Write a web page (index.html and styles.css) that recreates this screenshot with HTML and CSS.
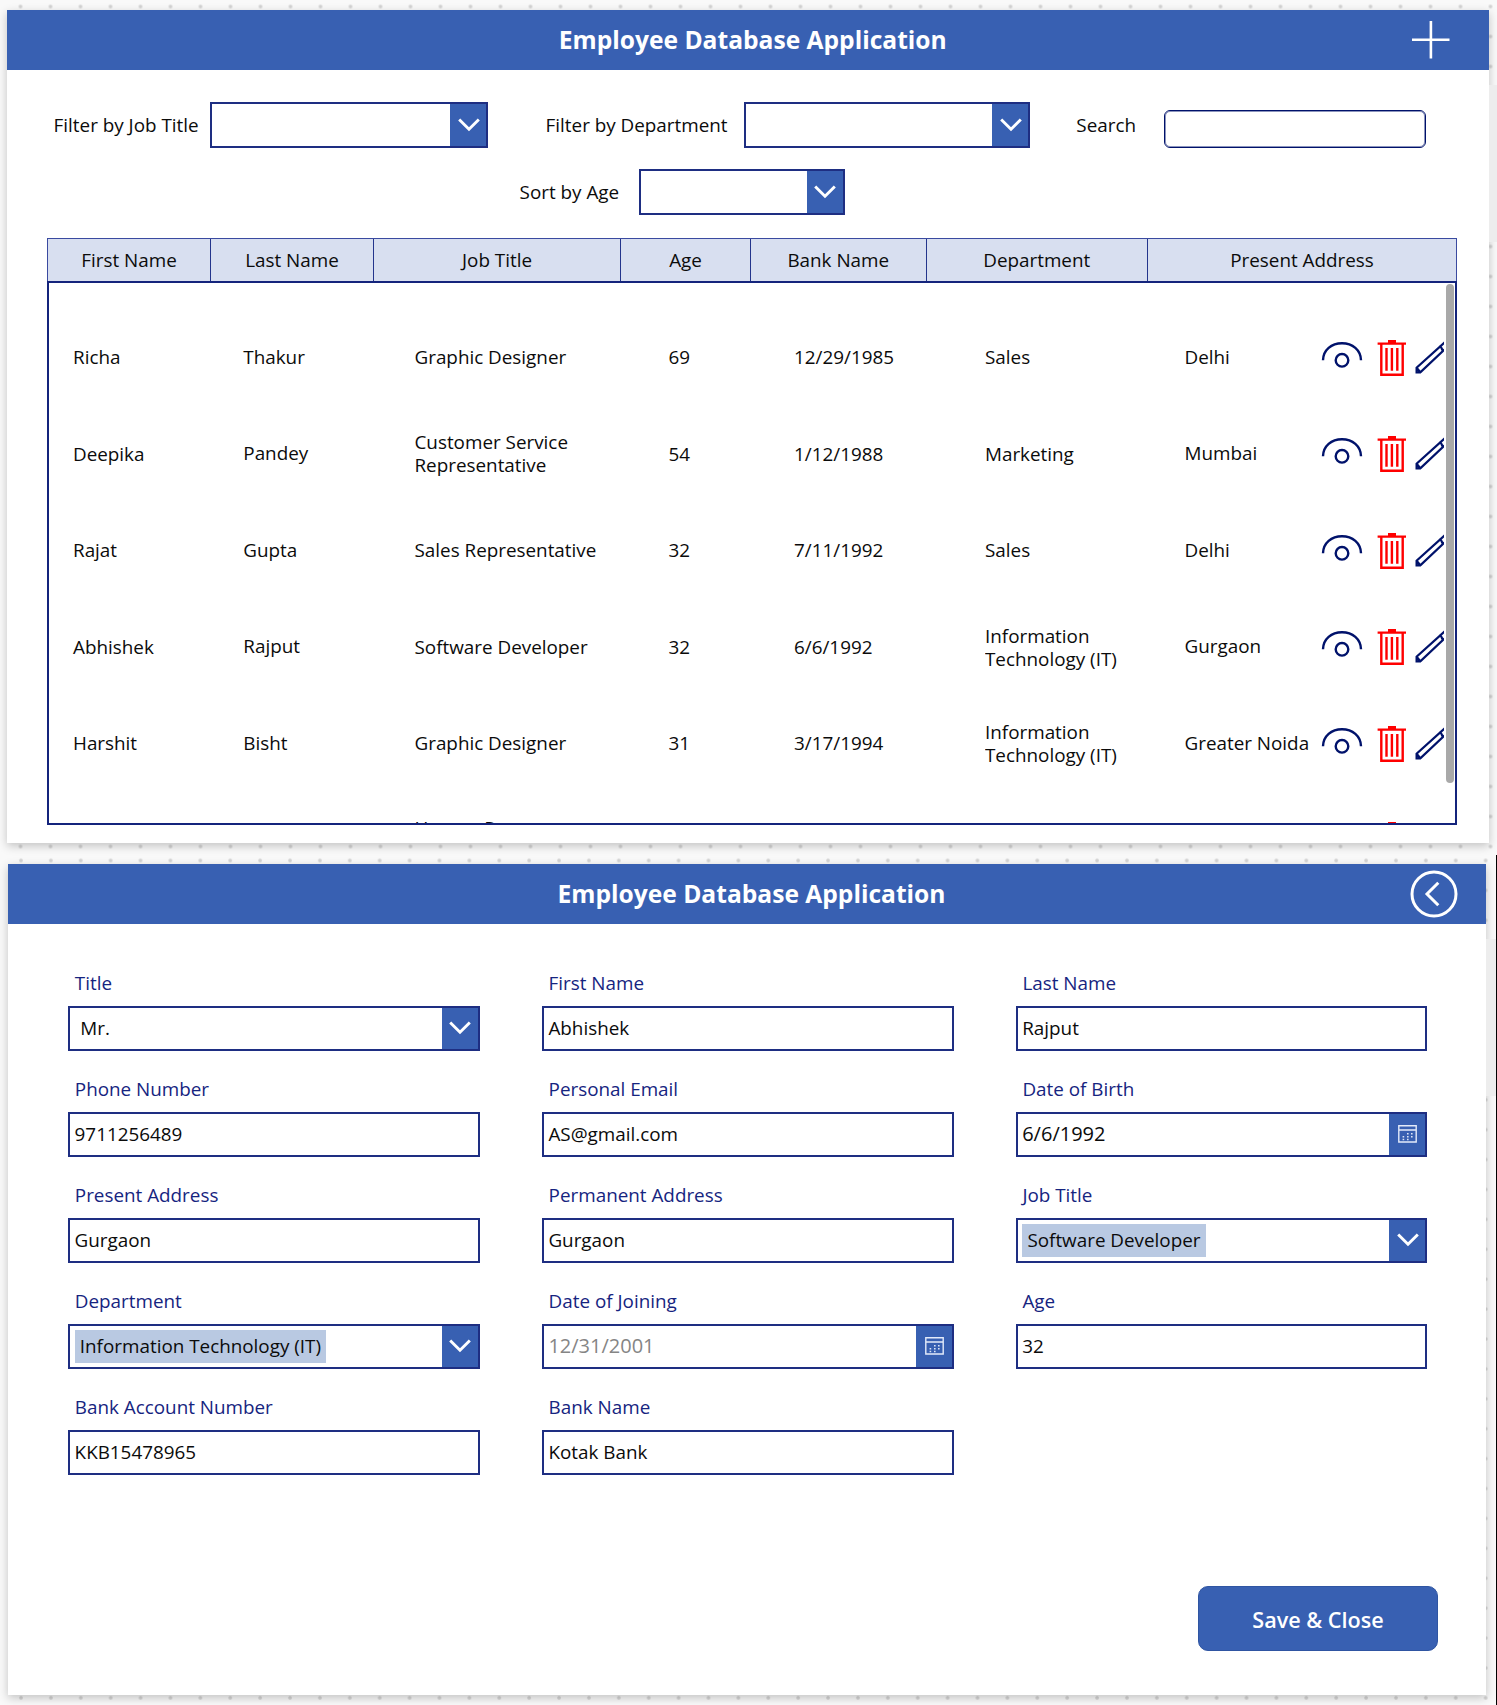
FILE: index.html
```html
<!DOCTYPE html>
<html lang="en">
<head>
<meta charset="utf-8">
<title>Employee Database Application</title>
<link rel="stylesheet" href="styles.css">
</head>
<body>
<svg class="sprite" aria-hidden="true">
  <symbol id="chevron" viewBox="0 0 22 14"><path d="M1.2 1.5 11 11.3 20.8 1.5" fill="none" stroke="#fff" stroke-width="2.900"/></symbol>
  <symbol id="calendar" viewBox="0 0 19 18"><path d="M.8.8h17.4v16.2H.8zM.8 5h17.4" fill="none" stroke="#e3eafa" stroke-width="1.4"/><path d="M9 8h1.6v1.6H9zM13 8h1.6v1.6H13zM4.6 11h1.6v1.6H4.6zM9 11h1.6v1.6H9zM13 11h1.6v1.6H13zM4.6 13.8h1.6v1.4H4.6zM9 13.8h1.6v1.4H9z" fill="#dbe4f6"/></symbol>
  <symbol id="eye" viewBox="0 0 42 36"><path d="M2 20.3C2.2 10 10.500 3.200 21 3.200S39.800 10 40 20.300" fill="none" stroke="#00126b" stroke-width="2.4"/><circle cx="21" cy="20.300" r="6.300" fill="none" stroke="#00126b" stroke-width="2.400"/></symbol>
  <symbol id="trash" viewBox="0 0 30 36"><path d="M11 0h8v2.400h10v2.400H.6V2.400H11z" fill="#f00"/><path d="M4.300 4v30.700h21.400V4M9.500 8v22.800M14.900 8v22.800M20.300 8v22.800" fill="none" stroke="#f00" stroke-width="2.400"/></symbol>
  <symbol id="pencil" viewBox="0 0 29 36"><path d="M31 1.300 1.600 27.800V32.300H5.300L31 8.200M1.600 27.800l3.700 4.500M24.300 6.500q2.600 .3 3 4" fill="none" stroke="#00126b" stroke-width="2.200"/></symbol>
</svg>

<section class="board board-list">
  <main class="screen">
    <header class="bar">
      <h1>Employee Database Application</h1>
      <svg class="add" viewBox="0 0 38 38"><path d="M0 18.800h37.500M18.900 0v37.500" stroke="#fff" stroke-width="2.600"/></svg>
    </header>
    <div class="filters">
      <label>Filter by Job Title</label>
      <div class="box select"><span class="btn"><svg><use href="#chevron"/></svg></span></div>
      <label>Filter by Department</label>
      <div class="box select"><span class="btn"><svg><use href="#chevron"/></svg></span></div>
      <label>Search</label>
      <div class="search"></div>
    </div>
    <div class="sort">
      <label>Sort by Age</label>
      <div class="box select"><span class="btn"><svg><use href="#chevron"/></svg></span></div>
    </div>
    <div class="thead">
      <span>First Name</span><span>Last Name</span><span>Job Title</span><span>Age</span><span>Bank Name</span><span>Department</span><span>Present Address</span>
    </div>
    <div class="tbody">
      <div class="rows">
        <div class="row"><span>Richa</span><span class="up">Thakur</span><span>Graphic Designer</span><span>69</span><span>12/29/1985</span><span>Sales</span><span class="up">Delhi</span><div class="icons"><svg class="i-eye"><use href="#eye"/></svg><svg class="i-trash"><use href="#trash"/></svg><svg class="i-pencil"><use href="#pencil"/></svg></div></div>
        <div class="row"><span>Deepika</span><span class="up">Pandey</span><span>Customer Service<br>Representative</span><span>54</span><span>1/12/1988</span><span>Marketing</span><span class="up">Mumbai</span><div class="icons"><svg class="i-eye"><use href="#eye"/></svg><svg class="i-trash"><use href="#trash"/></svg><svg class="i-pencil"><use href="#pencil"/></svg></div></div>
        <div class="row"><span>Rajat</span><span class="up">Gupta</span><span>Sales Representative</span><span>32</span><span>7/11/1992</span><span>Sales</span><span class="up">Delhi</span><div class="icons"><svg class="i-eye"><use href="#eye"/></svg><svg class="i-trash"><use href="#trash"/></svg><svg class="i-pencil"><use href="#pencil"/></svg></div></div>
        <div class="row"><span>Abhishek</span><span class="up">Rajput</span><span>Software Developer</span><span>32</span><span>6/6/1992</span><span class="clip">Information<br>Technology (IT)</span><span class="up">Gurgaon</span><div class="icons"><svg class="i-eye"><use href="#eye"/></svg><svg class="i-trash"><use href="#trash"/></svg><svg class="i-pencil"><use href="#pencil"/></svg></div></div>
        <div class="row"><span>Harshit</span><span class="up">Bisht</span><span>Graphic Designer</span><span>31</span><span>3/17/1994</span><span class="clip">Information<br>Technology (IT)</span><span class="up">Greater Noida</span><div class="icons"><svg class="i-eye"><use href="#eye"/></svg><svg class="i-trash"><use href="#trash"/></svg><svg class="i-pencil"><use href="#pencil"/></svg></div></div>
        <div class="row"><span></span><span></span><span>Human Resources<br>Manager</span><span></span><span></span><span></span><span></span><div class="icons"><svg class="i-eye"><use href="#eye"/></svg><svg class="i-trash"><use href="#trash"/></svg></div></div>
      </div>
      <div class="scroll"></div>
    </div>
  </main>
  <div class="patch"></div>
</section>

<section class="board board-form">
  <main class="screen">
    <header class="bar">
      <h1>Employee Database Application</h1>
      <svg class="back" viewBox="0 0 48 48"><circle cx="24" cy="24" r="22" fill="none" stroke="#fff" stroke-width="3"/><path d="M28.300 12.800 17 24l11.300 11.300" fill="none" stroke="#fff" stroke-width="3"/></svg>
    </header>
    <div class="form">
      <div class="field"><label>Title</label><div class="box select"><span class="value inset">Mr.</span><span class="btn"><svg><use href="#chevron"/></svg></span></div></div>
      <div class="field"><label>First Name</label><div class="box"><span class="value">Abhishek</span></div></div>
      <div class="field"><label>Last Name</label><div class="box"><span class="value">Rajput</span></div></div>
      <div class="field"><label>Phone Number</label><div class="box"><span class="value">9711256489</span></div></div>
      <div class="field"><label>Personal Email</label><div class="box"><span class="value">AS@gmail.com</span></div></div>
      <div class="field"><label>Date of Birth</label><div class="box"><span class="value date">6/6/1992</span><span class="btn"><svg class="cal"><use href="#calendar"/></svg></span></div></div>
      <div class="field"><label>Present Address</label><div class="box"><span class="value">Gurgaon</span></div></div>
      <div class="field"><label>Permanent Address</label><div class="box"><span class="value">Gurgaon</span></div></div>
      <div class="field"><label>Job Title</label><div class="box select"><span class="chip">Software Developer</span><span class="btn"><svg><use href="#chevron"/></svg></span></div></div>
      <div class="field"><label>Department</label><div class="box select"><span class="chip">Information Technology (IT)</span><span class="btn"><svg><use href="#chevron"/></svg></span></div></div>
      <div class="field"><label>Date of Joining</label><div class="box"><span class="value date muted">12/31/2001</span><span class="btn"><svg class="cal"><use href="#calendar"/></svg></span></div></div>
      <div class="field"><label>Age</label><div class="box"><span class="value">32</span></div></div>
      <div class="field"><label>Bank Account Number</label><div class="box"><span class="value">KKB15478965</span></div></div>
      <div class="field"><label>Bank Name</label><div class="box"><span class="value">Kotak Bank</span></div></div>
    </div>
    <button class="save">Save &amp; Close</button>
  </main>
  <div class="patch"></div>
</section>
</body>
</html>
```
FILE: styles.css
```css
* { box-sizing: border-box; }
body { margin: 0; width: 1497px; height: 1705px; overflow: hidden; background: #f8f8f8; font: 18.850px/22.8px "Open Sans", sans-serif; color: #0b0b0b; }
.sprite { display: none; }
svg { display: block; flex: none; }

/* dotted canvas behind each screen */
.board { display: flex; background-color: #f9f9f9; background-image: radial-gradient(circle at 15px 15px, #d3d3d3 1.3px, transparent 2.3px); background-size: 30px 30px; }
.board-list { height: 855px; padding: 9.500px 0 0 7px; background-position: 5.500px -8.500px; }
.board-form { height: 850px; padding: 8.500px 0 0 8px; border-right: 1px solid #000; background-position: 6px -9.500px; background-size: 29.900px 29.920px; }
.screen { display: flex; flex-direction: column; flex: none; background: #fff; box-shadow: 0 3px 9px rgba(0, 0, 0, .22); }
.board-list .screen { width: 1482px; height: 833.500px; }
.board-form .screen { width: 1478px; height: 831.500px; }
.patch { flex: 1; height: 157px; margin-top: 75px; background: #ededed; }

.bar { display: grid; grid-template-columns: 1fr auto 1fr; align-items: center; height: 60.500px; padding-left: 9.500px; background: #3860b2; flex: none; }
.board-form .bar { padding-left: 9px; }
.bar h1 { grid-column: 2; margin: 0; font-size: 24.600px; line-height: 34px; font-weight: 700; color: #fff; }
.bar svg { justify-self: end; }
.add { width: 38px; height: 38px; margin-right: 39px; }
.back { width: 48px; height: 48px; margin-right: 28.500px; }

.box { display: flex; align-items: center; background: #fff; border: 2px solid #1e2e82; }
.btn { display: flex; align-items: center; justify-content: center; width: 36px; height: 100%; margin-left: auto; padding-left: 1px; background: #3860b2; }
.btn svg { width: 22px; height: 14px; }
.btn .cal { width: 19px; height: 18px; }

.filters { display: grid; grid-template-columns: 157px 278px 57px 0 199.300px 286px 46px 87.500px 262px; align-items: center; height: 46px; margin: 32px 0 0 46px; }
.filters label { padding: 1px 0 0 .6px; }
.filters > :nth-child(3) { grid-column: 5; }
.filters > :nth-child(5) { grid-column: 8; padding-left: 0; }
.filters .box { height: 46px; }
.search { height: 38px; margin: 7px 0 0 .5px; border: 1.500px solid #00126b; outline: 1px solid rgba(0, 18, 107, .45); outline-offset: -2px; border-radius: 6px; }
.sort { display: grid; grid-template-columns: 119px 206px; align-items: center; height: 46px; margin: 21.200px 0 0 512.600px; }
.sort .box { height: 46px; }

.thead { display: grid; grid-template-columns: 163px 163px 247px 130px 175.500px 221.500px 1fr; width: 1410px; height: 43px; margin: 23.300px 0 0 40px; background: #d8dff0; border: 1px solid #3a4aa0; border-bottom: 0; }
.thead span { display: flex; align-items: center; justify-content: center; border-right: 1px solid #24358c; }
.thead span:last-child { border-right: 0; }
.tbody { display: flex; width: 1410px; height: 544px; margin-left: 40px; border: 2px solid #14247c; overflow: hidden; }
.rows { width: 1398px; padding-top: 26px; }
.row { display: grid; grid-template-columns: 170.300px 171.200px 254px 125.500px 191px 199.500px 137.200px 1fr; align-items: center; height: 96.500px; padding-left: 24px; white-space: nowrap; }
.row .up { padding-bottom: 1px; }
.row .clip { height: 44.600px; overflow: hidden; }
.icons { display: flex; margin-left: -.5px; }
.i-eye { width: 42px; height: 36px; margin-right: 14px; }
.i-trash { width: 30px; height: 36px; margin-right: 8px; }
.i-pencil { width: 29px; height: 36px; overflow: hidden; }
.scroll { width: 8px; height: 499px; margin: 1px 0 0 -1px; border-radius: 4px; background: #a9a9a9; flex: none; }

.form { display: grid; grid-template-columns: repeat(3, 411.500px); column-gap: 62.300px; margin: 48px 0 0 60.300px; grid-auto-rows: 106px; }
.field label { display: block; height: 33.500px; padding: .3px 0 0 6.500px; color: #16247f; }
.field .box { height: 45.500px; }
.value { padding-left: 4.300px; }
.value.inset { padding-left: 10px; }
.date { font-size: 20px; }
.muted { color: #858585; }
.chip { margin-left: 4.500px; padding: 5px; background: #b9c9e2; }
.save { width: 240px; height: 65px; margin: 84px 48px 0 auto; padding: 3px 0 0; border: 1.500px solid #2f55a2; border-radius: 10px; background: #3860b2; color: #fff; font: 600 21.600px/26px "Open Sans", sans-serif; }
```
